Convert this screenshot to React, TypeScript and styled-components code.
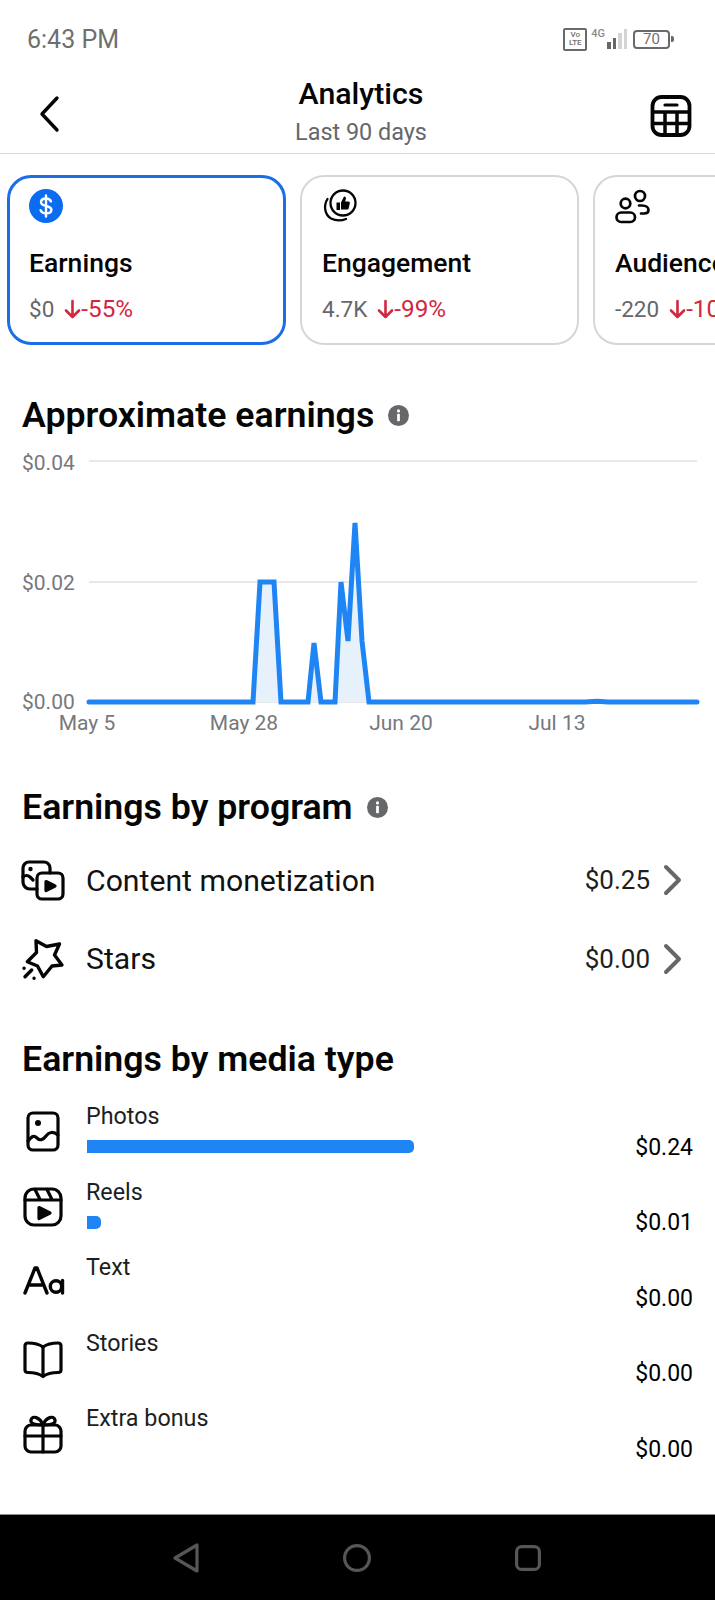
import styled, { createGlobalStyle } from "styled-components";

const GlobalStyle = createGlobalStyle`
  html, body {
    margin: 0;
    padding: 0;
    background: #fff;
  }
  body {
    font-family: Roboto, "Liberation Sans", sans-serif;
    color: #050505;
  }
`;

const Screen = styled.div`
  width: 715px;
  height: 1600px;
  display: flex;
  flex-direction: column;
  overflow: hidden;
  background: #fff;
`;

const Main = styled.main`
  flex: 1;
  min-height: 0;
`;

const StatusBar = styled.div`
  height: 78px;
  display: flex;
  align-items: center;
  justify-content: space-between;
  padding: 0 45px 0 27px;
  color: #6f6f6f;
`;

const Clock = styled.span`
  padding-top: 2px;
  font-size: 25px;
  line-height: 28px;
`;

const StatusIcons = styled.div`
  display: flex;
  align-items: center;
  gap: 2px;
`;

const VoLte = styled.span`
  width: 20px;
  height: 19px;
  margin-right: 2px;
  border: 2px solid #6a6a6a;
  border-radius: 2px;
  display: flex;
  flex-direction: column;
  align-items: center;
  justify-content: center;
  font-size: 8px;
  line-height: 8px;
  font-weight: 500;
`;

const Network = styled.span`
  font-size: 11px;
  line-height: 12px;
  font-weight: 500;
  align-self: flex-start;
  color: #8a8a8a;
`;

const Signal = styled.span`
  display: flex;
  align-items: flex-end;
  gap: 2px;
  height: 20px;
`;

const SignalBar = styled.span<{ $height: number; $on?: boolean }>`
  width: 3.5px;
  height: ${(p) => p.$height}px;
  background: ${(p) => (p.$on ? "#666" : "#d4d4d4")};
`;

const Battery = styled.span`
  width: 33px;
  height: 15px;
  margin-left: 4px;
  border: 2px solid #6a6a6a;
  border-radius: 4px;
  display: flex;
  align-items: center;
  justify-content: center;
  font-size: 15px;
  position: relative;
  &::after {
    content: "";
    position: absolute;
    right: -6px;
    top: 4px;
    width: 3px;
    height: 6px;
    background: #6a6a6a;
    border-radius: 0 2px 2px 0;
  }
`;

const Header = styled.header`
  height: 75px;
  display: grid;
  grid-template-columns: 1fr auto 1fr;
  align-items: start;
  padding: 0 22px 0 37px;
  border-bottom: 1px solid #dcdcdc;
`;

const HeaderSide = styled.div<{ $end?: boolean }>`
  display: flex;
  justify-content: ${(p) => (p.$end ? "flex-end" : "flex-start")};
  padding-top: 16px;
`;

const TitleBlock = styled.div`
  display: flex;
  flex-direction: column;
  align-items: center;
  margin-left: -8px;
`;

const Title = styled.h1`
  margin: 0;
  font-size: 30.3px;
  line-height: 32px;
  font-weight: 500;
`;

const Subtitle = styled.div`
  margin-top: 9px;
  font-size: 23.4px;
  line-height: 26px;
  color: #65676b;
`;

const CardRow = styled.div`
  display: flex;
  gap: 14px;
  margin-top: 21px;
  padding-left: 7px;
  overflow: hidden;
`;

const Card = styled.div<{ $active?: boolean }>`
  flex: 0 0 279px;
  height: 170px;
  box-sizing: border-box;
  padding: ${(p) => (p.$active ? "11px 19px" : "12px 20px")};
  border: ${(p) => (p.$active ? "3px solid #1b6ee5" : "2px solid #d6d6d6")};
  border-radius: 24px;
  white-space: nowrap;
`;

const CardIcon = styled.div`
  height: 34px;
  margin-bottom: 25px;
`;

const CardLabel = styled.div`
  font-size: 26.5px;
  line-height: 30px;
  font-weight: 500;
`;

const CardValue = styled.div`
  margin-top: 18px;
  display: flex;
  align-items: center;
  font-size: 22.5px;
  line-height: 26px;
  color: #65676b;
`;

const Delta = styled.span`
  display: flex;
  align-items: center;
  margin-left: 10px;
  font-size: 24.3px;
  color: #d3263f;
`;

const Heading = styled.h2<{ $top: number }>`
  display: flex;
  align-items: center;
  gap: 14px;
  margin: ${(p) => p.$top}px 0 0;
  padding-left: 22px;
  font-size: 35.7px;
  line-height: 40px;
  font-weight: 600;
`;

const ChartSvg = styled.svg`
  display: block;
  margin-top: 5px;
  text {
    font-family: Roboto, "Liberation Sans", sans-serif;
    font-size: 21px;
    fill: #76787c;
  }
`;

const ProgramList = styled.div`
  margin-top: 14px;
`;

const ProgramRow = styled.div`
  height: 78.5px;
  display: flex;
  align-items: center;
  padding: 0 33px 0 21px;
`;

const ProgramName = styled.span`
  flex: 1;
  margin-left: 21px;
  font-size: 30.2px;
  color: #111;
`;

const ProgramValue = styled.span`
  margin-right: 13px;
  font-size: 26px;
  color: #1c1e21;
`;

const MediaList = styled.div`
  display: flex;
  flex-direction: column;
  gap: 13.5px;
  margin-top: 21px;
`;

const MediaRow = styled.div`
  display: grid;
  grid-template-columns: 86px 1fr auto;
  grid-template-rows: 31px 31px;
  padding-right: 22px;
`;

const MediaIcon = styled.div`
  grid-row: 1 / 3;
  padding-left: 21px;
  align-self: center;
  height: 44px;
`;

const MediaLabel = styled.div`
  grid-column: 2 / 4;
  padding-top: 1px;
  font-size: 23.3px;
  line-height: 31px;
  color: #1c1e21;
`;

const BarTrack = styled.div`
  align-self: center;
  height: 13px;
  margin-left: 1px;
`;

const Bar = styled.div<{ $width: number }>`
  width: ${(p) => p.$width}px;
  height: 100%;
  background: #1f85f5;
  border-radius: 0 5px 5px 0;
`;

const MediaValue = styled.div`
  align-self: center;
  padding-top: 1px;
  font-size: 23px;
  color: #000;
`;

const NavBar = styled.nav`
  height: 85px;
  display: grid;
  grid-template-columns: repeat(3, 28px);
  justify-content: center;
  column-gap: 143px;
  align-items: center;
  justify-items: center;
  padding-right: 2px;
  background: #000;
  border-top: 1px solid #8c8c8c;
`;

const Icon = ({ size = 44, children }: { size?: number; children: React.ReactNode }) => (
  <svg width={size} height={size} viewBox="0 0 44 44" fill="none" stroke="#050505" strokeWidth={3.2} strokeLinecap="round" strokeLinejoin="round" style={{ display: "block" }}>
    {children}
  </svg>
);

const InfoDot = ({ size }: { size: number }) => (
  <svg width={size} height={size} viewBox="0 0 20 20">
    <circle cx="10" cy="10" r="10" fill="#65676b" />
    <circle cx="10" cy="5.6" r="1.5" fill="#fff" />
    <rect x="8.7" y="8.4" width="2.6" height="7" rx="0.6" fill="#fff" />
  </svg>
);

const DownArrow = () => (
  <svg width="17" height="20" viewBox="0 0 17 20" fill="none" stroke="#d3263f" strokeWidth="2.6" strokeLinecap="round" strokeLinejoin="round">
    <path d="M8.5 2v16M2 11.5 8.5 18 15 11.5" />
  </svg>
);

const Chevron = () => (
  <svg width="19" height="32" viewBox="0 0 19 32" fill="none" stroke="#65676b" strokeWidth="4" strokeLinecap="round" strokeLinejoin="round">
    <path d="M3 3l13 13L3 29" />
  </svg>
);

const linePoints =
  "89,702 253,702 260,582 274,582 281,702 308,702 314,643 321,702 335,702 341,582 348,641 355,523 362,641 369,702 585,702 597,701.2 608,702 697,702";

const EarningsChart = () => (
  <ChartSvg width="715" height="300" viewBox="0 440 715 300">
    <path d="M89 461H697M89 582H697M89 702H697" stroke="#e8e8e8" strokeWidth="2" />
    <polygon points={linePoints} fill="#e7f1fb" />
    <polyline points={linePoints} fill="none" stroke="#1f85f5" strokeWidth="5" strokeLinejoin="miter" strokeLinecap="round" />
    <text x="22" y="470">$0.04</text>
    <text x="22" y="590">$0.02</text>
    <text x="22" y="709">$0.00</text>
    <text x="87" y="730" textAnchor="middle">May 5</text>
    <text x="244" y="730" textAnchor="middle">May 28</text>
    <text x="401" y="730" textAnchor="middle">Jun 20</text>
    <text x="557" y="730" textAnchor="middle">Jul 13</text>
  </ChartSvg>
);

const media = [
  {
    name: "Photos",
    value: "$0.24",
    bar: 327,
    icon: (
      <Icon>
        <rect x="7" y="4" width="30" height="37" rx="5" />
        <circle cx="17" cy="14" r="3" fill="#050505" stroke="none" />
        <path d="M7 32c4-5 6-6 9-3s6 2 9-2 7-5 12-1" />
      </Icon>
    ),
  },
  {
    name: "Reels",
    value: "$0.01",
    bar: 14,
    icon: (
      <Icon>
        <rect x="4" y="4" width="36" height="36" rx="9" />
        <path d="M4 15H40M14 4.5l5 10M26 4.5l5 10" />
        <path d="M18 22.5 29 28 18 33.5Z" fill="#050505" />
      </Icon>
    ),
  },
  {
    name: "Text",
    value: "$0.00",
    bar: 0,
    icon: (
      <Icon>
        <path d="M4 33 14 8h2l10 25M7.500 25h15" strokeWidth="3.400" />
        <circle cx="35" cy="26.500" r="5.700" strokeWidth="3.400" />
        <path d="M41.500 20.500V33" strokeWidth="3.400" />
      </Icon>
    ),
  },
  {
    name: "Stories",
    value: "$0.00",
    bar: 0,
    icon: (
      <Icon>
        <path d="M22 11c-4-3-10-4-15-4-2 0-3 1-3 3v24c0 2 1 2.500 3 2.500 6 0 11 1 15 4 4-3 9-4 15-4 2 0 3-.5 3-2.500V10c0-2-1-3-3-3-5 0-11 1-15 4Z" />
        <path d="M22 11v29" />
      </Icon>
    ),
  },
  {
    name: "Extra bonus",
    value: "$0.00",
    bar: 0,
    icon: (
      <Icon>
        <rect x="4" y="14" width="36" height="27" rx="6" />
        <path d="M4 25H40M22 14V41" />
        <path d="M22 14c-3-8-11-10-12-5-1 4 5 5 12 5Zm0 0c3-8 11-10 12-5 1 4-5 5-12 5Z" />
      </Icon>
    ),
  },
];

export default function App() {
  return (
    <Screen>
      <GlobalStyle />
      <Main>
        <StatusBar>
          <Clock>6:43 PM</Clock>
          <StatusIcons>
            <VoLte>
              <span>Vo</span>
              <span>LTE</span>
            </VoLte>
            <Network>4G</Network>
            <Signal>
              <SignalBar $height={7} $on />
              <SignalBar $height={11} $on />
              <SignalBar $height={16} />
              <SignalBar $height={20} />
            </Signal>
            <Battery>70</Battery>
          </StatusIcons>
        </StatusBar>

        <Header>
          <HeaderSide>
            <svg width="30" height="40" viewBox="0 0 30 40" fill="none" stroke="#050505" strokeWidth="3.4" strokeLinecap="round" strokeLinejoin="round">
              <path d="M20 4 5 20l15 16" />
            </svg>
          </HeaderSide>
          <TitleBlock>
            <Title>Analytics</Title>
            <Subtitle>Last 90 days</Subtitle>
          </TitleBlock>
          <HeaderSide $end>
            <Icon>
              <rect x="3.500" y="3" width="37" height="38" rx="9" strokeWidth="3.800" />
              <path d="M16 11H28" strokeWidth="3.200" />
              <path d="M3.500 18H40.500M3.500 29.500H40.500M16 18V41M28 18V41" strokeWidth="3.500" strokeLinecap="butt" />
            </Icon>
          </HeaderSide>
        </Header>

        <CardRow>
          <Card $active>
            <CardIcon>
              <svg width="34" height="34" viewBox="0 0 34 34">
                <circle cx="17" cy="17" r="17" fill="#0a6cf0" />
                <path d="M22 12.500c-.8-2-2.600-3-5-3-2.800 0-5 1.400-5 3.700 0 5 10.400 2.600 10.400 7.600 0 2.400-2.400 3.700-5.400 3.700-2.700 0-4.700-1.200-5.400-3.300M17 6.500v21" fill="none" stroke="#fff" strokeWidth="2.400" strokeLinecap="round" />
              </svg>
            </CardIcon>
            <CardLabel>Earnings</CardLabel>
            <CardValue>
              $0
              <Delta>
                <DownArrow />
                -55%
              </Delta>
            </CardValue>
          </Card>

          <Card>
            <CardIcon>
              <svg width="36" height="36" viewBox="0 0 36 36" fill="none" stroke="#050505" strokeWidth="2.300" strokeLinecap="round">
                <circle cx="21" cy="14" r="12.500" />
                <path d="M5.500 10C1 17 3 26 9 29.500c5 2.500 10 2.500 15 .5" />
                <path d="M14.500 13.500h3.500v7.500h-3.500Z" fill="#050505" stroke="none" />
                <path d="M19 13.500l3-6c1.600 0 2.300 1 1.800 2.800l-.6 2.200h3.300c1 0 1.500.8 1.300 1.700l-1.100 5c-.2.800-.8 1.300-1.600 1.300H19Z" fill="#050505" stroke="none" />
              </svg>
            </CardIcon>
            <CardLabel>Engagement</CardLabel>
            <CardValue>
              4.7K
              <Delta>
                <DownArrow />
                -99%
              </Delta>
            </CardValue>
          </Card>

          <Card>
            <CardIcon>
              <svg width="36" height="36" viewBox="0 0 36 36" fill="none" stroke="#050505" strokeWidth="2.700" strokeLinecap="round" strokeLinejoin="round">
                <circle cx="25" cy="7" r="5" />
                <circle cx="10.500" cy="14.500" r="4.800" />
                <path d="M24 16.500h3c4 0 6.500 2 6.500 4.500s-2 3.500-4.500 3.500H26" />
                <rect x="1.500" y="23.500" width="18.500" height="9.500" rx="4.700" />
              </svg>
            </CardIcon>
            <CardLabel>Audience</CardLabel>
            <CardValue>
              -220
              <Delta>
                <DownArrow />
                -100%
              </Delta>
            </CardValue>
          </Card>
        </CardRow>

        <Heading $top={50}>
          Approximate earnings
          <InfoDot size={21} />
        </Heading>
        <EarningsChart />

        <Heading $top={47}>
          Earnings by program
          <InfoDot size={21} />
        </Heading>
        <ProgramList>
          <ProgramRow>
            <Icon>
              <path d="M16 31H9c-4 0-7-3-7-7V10c0-3 2.500-6 6-6h15c3 0 6 2.500 6 6v5" />
              <path d="M2 19c2-2 5-2 7 0l3 3" />
              <circle cx="9.500" cy="11" r="2.200" fill="#050505" stroke="none" />
              <rect x="16" y="15" width="26" height="26" rx="5" />
              <path d="M25 23.500 34 28l-9 4.500Z" fill="#050505" />
            </Icon>
            <ProgramName>Content monetization</ProgramName>
            <ProgramValue>$0.25</ProgramValue>
            <Chevron />
          </ProgramRow>
          <ProgramRow>
            <Icon>
              <path d="M15 3.700 25.500 9.500 38.500 7 33.500 18 41 28 31 29 22.300 39.700 16.500 29 6.300 24.700 15.500 15.500Z" strokeWidth="3.400" />
              <path d="M3 31.300h.1M4 39.700 10.700 33M13 41.300h.1" strokeWidth="3.400" />
            </Icon>
            <ProgramName>Stars</ProgramName>
            <ProgramValue>$0.00</ProgramValue>
            <Chevron />
          </ProgramRow>
        </ProgramList>

        <Heading $top={41}>Earnings by media type</Heading>
        <MediaList>
          {media.map((item) => (
            <MediaRow key={item.name}>
              <MediaIcon>{item.icon}</MediaIcon>
              <MediaLabel>{item.name}</MediaLabel>
              <BarTrack>{item.bar > 0 && <Bar $width={item.bar} />}</BarTrack>
              <MediaValue>{item.value}</MediaValue>
            </MediaRow>
          ))}
        </MediaList>
      </Main>

      <NavBar>
        <svg width="26" height="30" viewBox="0 0 26 30" fill="none" stroke="#565656" strokeWidth="3.200" strokeLinejoin="round">
          <path d="M24 2v26L2 15Z" />
        </svg>
        <svg width="28" height="28" viewBox="0 0 28 28" fill="none" stroke="#565656" strokeWidth="3.200">
          <circle cx="14" cy="14" r="12.400" />
        </svg>
        <svg width="26" height="26" viewBox="0 0 26 26" fill="none" stroke="#565656" strokeWidth="3.200">
          <rect x="1.600" y="1.600" width="22.800" height="22.800" rx="5" />
        </svg>
      </NavBar>
    </Screen>
  );
}
